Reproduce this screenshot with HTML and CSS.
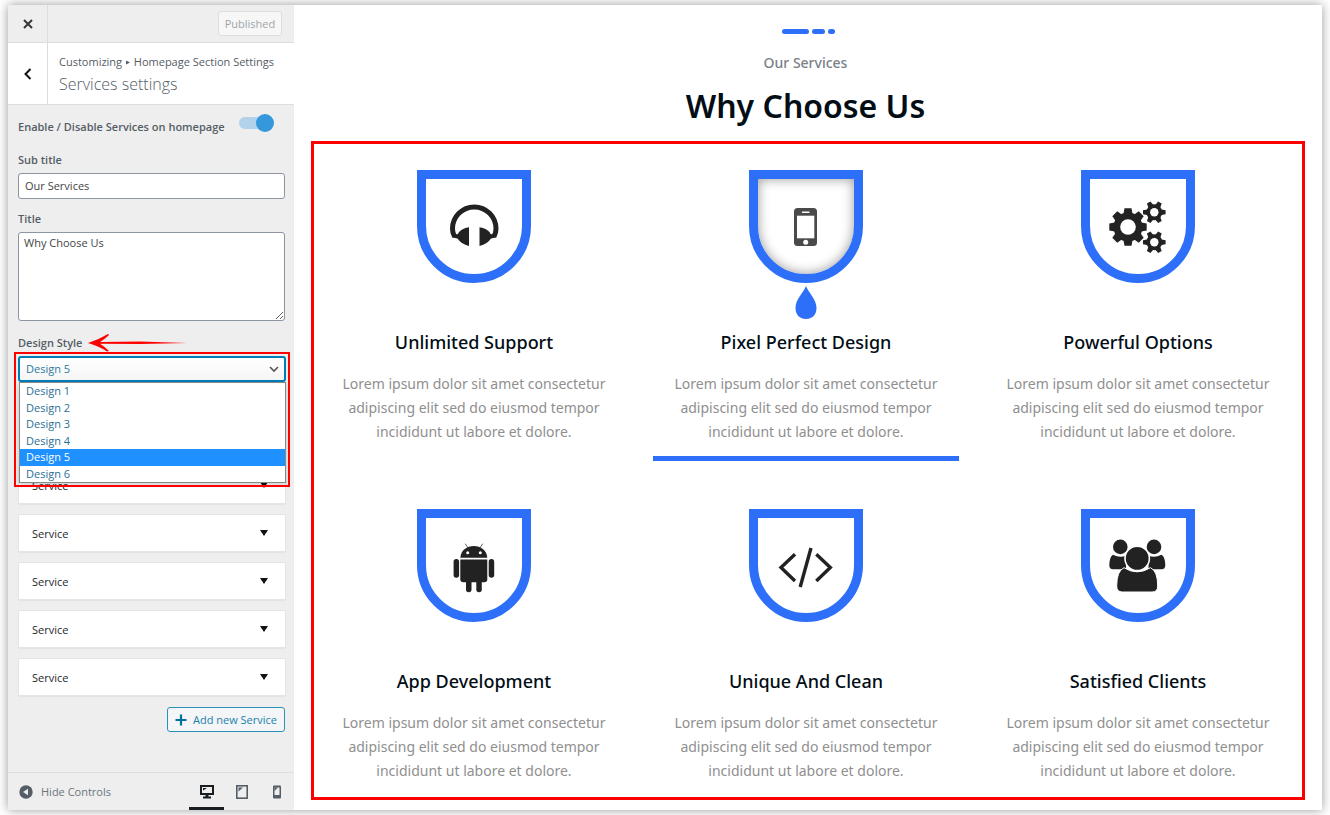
FILE: index.html
```html
<!DOCTYPE html>
<html lang="en">
<head>
  <meta charset="UTF-8" />
  <meta name="viewport" content="width=device-width, initial-scale=1" />
  <title>Services settings</title>
  <link rel="stylesheet" href="styles.css">
</head>
<body>

<div class="customizer">

  <aside class="sidebar">
    <header class="top-bar">
      <button class="close" aria-label="Close">
        <svg width="10" height="10" viewBox="0 0 10 10"><path d="M1 1L9 9M9 1L1 9" stroke="#32373c" stroke-width="2" fill="none"/></svg>
      </button>
      <button class="published" disabled>Published</button>
    </header>

    <div class="section-title">
      <button class="back" aria-label="Back">
        <svg width="8" height="12" viewBox="0 0 8 12"><path d="M6.5 1L1.500 6L6.5 11" stroke="#111" stroke-width="2" fill="none"/></svg>
      </button>
      <div class="section-text">
        <p class="crumbs">Customizing <svg width="4" height="5" viewBox="0 0 5 6"><path d="M0 0.5L5 3L0 5.5z" fill="#555d66"/></svg> Homepage Section Settings</p>
        <h1>Services settings</h1>
      </div>
    </div>

    <form class="controls">
      <div class="toggle-row">
        <label for="enable">Enable / Disable Services on homepage</label>
        <input type="checkbox" id="enable" class="toggle" checked />
      </div>

      <label class="field-label" for="subtitle">Sub title</label>
      <input type="text" id="subtitle" class="text-input" value="Our Services" />

      <label class="field-label" for="title">Title</label>
      <textarea id="title" class="text-area">Why Choose Us</textarea>

      <div class="style-label">
        <label for="design">Design Style</label>
        <svg width="100" height="20" viewBox="0 0 100 20">
          <path d="M0 10Q10 7 20 1L21 2Q17 6 12 9L52 8.500L99 10L52 11L12 10.800Q17 14 21 18L19 18.500Q11 13 0 10z" fill="#f00"/>
        </svg>
      </div>
      <div class="select-wrap">
        <select id="design" class="select">
          <option>Design 1</option>
          <option>Design 2</option>
          <option>Design 3</option>
          <option>Design 4</option>
          <option selected>Design 5</option>
          <option>Design 6</option>
        </select>
        <svg class="chevron" width="10" height="7" viewBox="0 0 10 7"><path d="M1 1L5 5L9 1" stroke="#555" stroke-width="1.600" fill="none"/></svg>
        <ul class="dropdown" role="listbox" aria-label="Design Style">
          <li role="option">Design 1</li>
          <li role="option">Design 2</li>
          <li role="option">Design 3</li>
          <li role="option">Design 4</li>
          <li role="option" class="selected" aria-selected="true">Design 5</li>
          <li role="option">Design 6</li>
        </ul>
        <div class="highlight"></div>
      </div>

      <div class="service-list">
        <button type="button" class="service-item">Service <span class="arrow"></span></button>
        <button type="button" class="service-item">Service <span class="arrow"></span></button>
        <button type="button" class="service-item">Service <span class="arrow"></span></button>
        <button type="button" class="service-item">Service <span class="arrow"></span></button>
        <button type="button" class="service-item">Service <span class="arrow"></span></button>
      </div>

      <button type="button" class="add-service">
        <svg width="12" height="12" viewBox="0 0 12 12"><path d="M6 0.500V11.500M0.500 6H11.500" stroke="#0071a1" stroke-width="2.200"/></svg>
        Add new Service
      </button>
    </form>

    <footer class="bottom-bar">
      <button class="hide-controls">
        <svg width="14" height="14" viewBox="0 0 14 14"><circle cx="7" cy="7" r="6.700" fill="#555d66"/><path d="M9 3.800V10.200L4 7z" fill="#eee"/></svg>
        Hide Controls
      </button>
      <div class="devices">
        <button class="device active" aria-label="Desktop">
          <svg width="14" height="14" viewBox="0 0 14 14"><path d="M1 1H13V9H1z" fill="#eee" stroke="#191e23" stroke-width="2"/><path d="M3 3H7L3 5.500z" fill="#191e23"/><path d="M5.500 9H8.500V11.500H11V13.500H3V11.500H5.500z" fill="#191e23"/></svg>
        </button>
        <button class="device" aria-label="Tablet">
          <svg width="12" height="14" viewBox="0 0 12 14"><rect x="0.800" y="0.800" width="10.400" height="12.400" fill="#eee" stroke="#555d66" stroke-width="1.600"/><path d="M2.500 2.500H7L2.500 6.500z" fill="#555d66"/></svg>
        </button>
        <button class="device" aria-label="Mobile">
          <svg width="10" height="14" viewBox="0 0 10 14"><rect x="1" y="0.500" width="8" height="13" rx="1" fill="#555d66"/><path d="M2.500 2.500H7.500V10H2.500z" fill="#eee"/><path d="M2.500 2.500H6L2.500 6z" fill="#555d66"/></svg>
        </button>
      </div>
    </footer>
  </aside>

  <main class="preview">
    <div class="heading">
      <div class="dashes"><span class="dash long"></span><span class="dash mid"></span><span class="dash short"></span></div>
      <p>Our Services</p>
      <h2>Why Choose Us</h2>
    </div>

    <section class="services">
      <article class="card">
        <div class="shield">
          <svg width="60" height="60" viewBox="0 0 60 60" fill="#222">
            <path d="M10.500 39.500Q8.500 36 8.500 31.700A21.700 21.700 0 0 1 52 31.700Q52 36 50 39.500" fill="none" stroke="#222" stroke-width="5"/>
            <path d="M25 30.300L21.500 31Q15 33.500 14 37L8.500 38V40.500L13.500 41.500Q17 47 25 49z"/>
            <path d="M35.500 30.300L39 31Q45.500 33.500 46.500 37L52 38V40.500L47 41.500Q43.500 47 35.500 49z"/>
          </svg>
        </div>
        <h3>Unlimited Support</h3>
        <p>Lorem ipsum dolor sit amet consectetur adipiscing elit sed do eiusmod tempor incididunt ut labore et dolore.</p>
      </article>

      <article class="card active">
        <div class="shield">
          <svg width="60" height="60" viewBox="0 0 60 60">
            <rect x="18" y="11" width="23" height="38" rx="3.500" fill="#4a4a4a"/>
            <rect x="21" y="18.700" width="17.300" height="22.600" fill="#fff"/>
            <circle cx="29.700" cy="45.200" r="2.500" fill="#fff"/>
            <path d="M26.500 15.300H33" stroke="#fff" stroke-width="1.400" stroke-linecap="round"/>
          </svg>
          <svg class="drop" width="22" height="34" viewBox="0 0 22 34"><path d="M11 0C13 6 21.500 13 21.500 22C21.500 29 17 33 11 33C5 33 0.500 29 0.500 22C0.500 13 9 6 11 0z" fill="#2d6ff9"/></svg>
        </div>
        <h3>Pixel Perfect Design</h3>
        <p>Lorem ipsum dolor sit amet consectetur adipiscing elit sed do eiusmod tempor incididunt ut labore et dolore.</p>
      </article>

      <article class="card">
        <div class="shield">
          <svg width="60" height="60" viewBox="0 0 60 60" fill="#222">
            <defs>
              <path id="tooth" d="M-4.700 -12L-3.500 -18.700H3.500L4.700 -12z"/>
              <g id="teeth"><use href="#tooth"/><use href="#tooth" transform="rotate(90)"/><use href="#tooth" transform="rotate(180)"/><use href="#tooth" transform="rotate(270)"/></g>
              <path id="cog" d="M-3 -6L-2 -11.300H2L3 -6z"/>
              <g id="gear">
                <circle r="8"/>
                <use href="#cog" transform="rotate(30)"/><use href="#cog" transform="rotate(90)"/><use href="#cog" transform="rotate(150)"/>
                <use href="#cog" transform="rotate(210)"/><use href="#cog" transform="rotate(270)"/><use href="#cog" transform="rotate(330)"/>
                <circle r="4.200" fill="#fff"/>
              </g>
            </defs>
            <g transform="translate(20 30)">
              <circle r="14.500"/>
              <use href="#teeth"/>
              <use href="#teeth" transform="rotate(45)"/>
              <circle r="7.800" fill="#fff"/>
            </g>
            <use href="#gear" transform="translate(46.300 15.300)"/>
            <use href="#gear" transform="translate(46.300 45.200)"/>
          </svg>
        </div>
        <h3>Powerful Options</h3>
        <p>Lorem ipsum dolor sit amet consectetur adipiscing elit sed do eiusmod tempor incididunt ut labore et dolore.</p>
      </article>

      <article class="card">
        <div class="shield">
          <svg width="60" height="60" viewBox="0 0 60 60" fill="#222">
            <path d="M21.300 7.700L24 12M38.700 7.700L36 12" stroke="#666" stroke-width="1"/>
            <path d="M16.300 21.700C17 14 23 10 29.800 10C36.600 10 42.600 14 43.300 21.700z"/>
            <circle cx="23.700" cy="16.700" r="1.500" fill="#fff"/>
            <circle cx="36.300" cy="16.700" r="1.500" fill="#fff"/>
            <path d="M16.300 23.400H43.300V43.300Q43.300 46.300 40.300 46.300H19.300Q16.300 46.300 16.300 43.300z"/>
            <rect x="9.600" y="23" width="5.500" height="18.700" rx="2.700"/>
            <rect x="44.700" y="23" width="5.500" height="18.700" rx="2.700"/>
            <rect x="22" y="42" width="5.500" height="14.300" rx="2.700"/>
            <rect x="32.300" y="42" width="5.500" height="14.300" rx="2.700"/>
          </svg>
        </div>
        <h3>App Development</h3>
        <p>Lorem ipsum dolor sit amet consectetur adipiscing elit sed do eiusmod tempor incididunt ut labore et dolore.</p>
      </article>

      <article class="card">
        <div class="shield">
          <svg width="60" height="60" viewBox="0 0 60 60" fill="none" stroke="#222" stroke-width="3.400">
            <path d="M19 18.300L5 31.600L19 45"/>
            <path d="M40.300 18.300L54.300 31.600L40.300 45"/>
            <path d="M35 12L24.200 51"/>
          </svg>
        </div>
        <h3>Unique And Clean</h3>
        <p>Lorem ipsum dolor sit amet consectetur adipiscing elit sed do eiusmod tempor incididunt ut labore et dolore.</p>
      </article>

      <article class="card">
        <div class="shield">
          <svg width="60" height="60" viewBox="0 0 60 60" fill="#222">
            <circle cx="12.300" cy="10.900" r="7.300"/>
            <circle cx="46" cy="10.900" r="7.300"/>
            <path d="M5 18.700Q12 22.500 18 19.500V33.300H5Q1.300 33.300 1.300 29Q1.300 21 5 18.700z"/>
            <path d="M53.500 18.700Q46.500 22.500 40.500 19.500V33.300H53.500Q57.300 33.300 57.300 29Q57.300 21 53.500 18.700z"/>
            <path d="M16 31.700Q29 40 42.500 31.700Q49.700 35 49.700 50Q49.700 56 44 56H14.500Q8.700 56 8.700 50Q8.700 35 16 31.700z" stroke="#fff" stroke-width="1"/>
            <circle cx="29.200" cy="22.400" r="12.200" stroke="#fff" stroke-width="1.600"/>
          </svg>
        </div>
        <h3>Satisfied Clients</h3>
        <p>Lorem ipsum dolor sit amet consectetur adipiscing elit sed do eiusmod tempor incididunt ut labore et dolore.</p>
      </article>
    </section>
  </main>

</div>

</body>
</html>
```
FILE: styles.css
```css
* {
  box-sizing: border-box;
}

body {
  margin: 0;
  padding: 5px 8px;
  background: #fff;
  font-family: "Noto Sans", sans-serif;
}

h1, h2, h3, p, ul {
  margin: 0;
  padding: 0;
}

button {
  font-family: inherit;
  padding: 0;
  border: 0;
  background: none;
  cursor: pointer;
}

svg {
  flex-shrink: 0;
}

.customizer {
  display: flex;
  min-height: calc(100vh - 10px);
  background: #fff;
  box-shadow: 0 0 10px rgba(0,0,0,0.4);
}

/* Sidebar */
.sidebar {
  display: flex;
  flex-direction: column;
  width: 286px;
  flex-shrink: 0;
  background: #eee;
  color: #555d66;
  font-family: "Open Sans", sans-serif;
  font-size: 11px;
  line-height: 16px;
}

.top-bar {
  display: flex;
  align-items: center;
  justify-content: space-between;
  height: 38px;
  padding-right: 12px;
  border-bottom: 1px solid #ddd;
}

.close, .back {
  display: flex;
  align-items: center;
  justify-content: center;
  align-self: stretch;
  width: 40px;
  border-right: 1px solid #ddd;
}

.published {
  width: 64px;
  height: 25px;
  border: 1px solid #ddd;
  border-radius: 3px;
  background: #f7f7f7;
  color: #a0a5aa;
  font-size: 11px;
}

.section-title {
  display: flex;
  height: 62px;
  background: #fff;
  border-bottom: 1px solid #ddd;
}

.section-text {
  padding: 11px 0 0 11px;
  white-space: nowrap;
}

.crumbs svg {
  margin: 0 1px;
  vertical-align: 1px;
}

.section-text h1 {
  font-size: 16px;
  font-weight: 300;
  line-height: 24px;
  margin-top: 2px;
}

.controls {
  flex: 1;
  display: flex;
  flex-direction: column;
  padding: 9px 9px 0 10px;
}

.controls label {
  font-weight: 600;
}

.toggle-row {
  display: flex;
  justify-content: space-between;
  padding-right: 11px;
  height: 26px;
}

.toggle-row label {
  margin-top: 5px;
  white-space: nowrap;
}

.toggle {
  appearance: none;
  position: relative;
  width: 35px;
  height: 18px;
  margin: 0;
}

.toggle::before {
  content: "";
  position: absolute;
  top: 3px;
  left: 0;
  width: 30px;
  height: 12px;
  border-radius: 6px;
  background: #b1d2ea;
}

.toggle::after {
  content: "";
  position: absolute;
  top: 0;
  right: 0;
  width: 18px;
  height: 18px;
  border-radius: 50%;
  background: #3498db;
}

.field-label {
  margin: 12px 0 5px;
}

.text-input, .text-area {
  width: 100%;
  border: 1px solid #8d96a0;
  border-radius: 3px;
  background: #fff;
  color: #444;
  font-family: inherit;
  font-size: 11px;
}

.text-input {
  height: 26px;
  padding: 0 6px 1px;
}

.text-area {
  display: block;
  height: 89px;
  padding: 2px 5px;
  line-height: 16px;
}

.style-label {
  display: flex;
  align-items: center;
  gap: 6px;
  height: 20px;
  margin: 12px 0 3px;
}

.select-wrap {
  position: relative;
  margin-right: -1px;
}

.select {
  appearance: none;
  display: block;
  width: 100%;
  height: 26px;
  padding: 0 6px 1px;
  border: 2px solid #007cba;
  border-radius: 3px;
  background: linear-gradient(#fff, #f5f5f5);
  color: #2a7ba3;
  font-family: inherit;
  font-size: 11px;
}

.chevron {
  position: absolute;
  top: 10px;
  right: 7px;
}

.dropdown {
  position: absolute;
  top: 26px;
  left: 1px;
  right: 0;
  z-index: 2;
  display: flex;
  flex-direction: column;
  height: 101px;
  list-style: none;
  border: 1px solid #888;
  background: #fff;
  color: #2a6f95;
  box-shadow: 0 2px 4px rgba(0,0,0,0.2);
}

.dropdown li {
  flex: 1;
  padding-left: 6px;
}

.dropdown .selected {
  background: #1e90ff;
  color: #fff;
}

/* red frame around the open menu */
.highlight {
  position: absolute;
  top: -4px;
  left: -4px;
  right: -4px;
  height: 135px;
  border: 2px solid #f00;
  z-index: 3;
  pointer-events: none;
}

.service-list {
  display: flex;
  flex-direction: column;
  gap: 10px;
  margin: 84px -1px 11px 0;
}

.service-item {
  display: flex;
  align-items: center;
  justify-content: space-between;
  height: 38px;
  padding: 0 17px 0 13px;
  border: 1px solid #e5e5e5;
  background: #fff;
  box-shadow: 0 1px 1px rgba(0,0,0,0.04);
  color: #23282d;
  font-size: 11px;
  font-weight: 500;
}

.arrow {
  border: 4px solid transparent;
  border-top: 6px solid #111;
  border-bottom: 0;
}

.add-service {
  display: flex;
  align-items: center;
  justify-content: center;
  gap: 6px;
  align-self: flex-end;
  width: 118px;
  height: 25px;
  border: 1px solid #2e8fb8;
  border-radius: 3px;
  background: #f3f5f6;
  color: #1a80ad;
  font-size: 11px;
  white-space: nowrap;
}

.bottom-bar {
  display: flex;
  justify-content: space-between;
  height: 38px;
  border-top: 1px solid #ddd;
}

.hide-controls {
  display: flex;
  align-items: center;
  gap: 8px;
  padding-left: 11px;
  color: #6c757d;
  font-size: 11px;
}

.devices {
  display: flex;
}

.device {
  display: flex;
  align-items: center;
  justify-content: center;
  width: 35px;
}

.device.active {
  padding-top: 3px;
  border-bottom: 3px solid #191e23;
}

/* Preview */
.preview {
  flex: 1;
  min-width: 0;
}

.heading {
  padding: 24px 5px 0 0;
  text-align: center;
}

.dashes {
  display: flex;
  justify-content: center;
  gap: 3px;
  padding-left: 6px;
}

.dash {
  height: 5px;
  border-radius: 3px;
  background: #2d6ff9;
}

.long { width: 27px; }
.mid { width: 13px; }
.short { width: 7px; }

.heading p {
  margin-top: 19px;
  color: #7a8087;
  font-size: 14px;
  font-weight: 500;
  line-height: 20px;
}

.heading h2 {
  margin-top: 13px;
  color: #020d15;
  font-size: 32px;
  font-weight: 600;
  line-height: 40px;
}

.services {
  display: grid;
  grid-template-columns: repeat(3, 1fr);
  gap: 53px 26px;
  margin: 15px 17px 0;
  padding: 26px 11px 2px 7px;
  border: 3px solid #f00;
}

.card {
  position: relative;
  display: flex;
  flex-direction: column;
  align-items: center;
  padding-bottom: 12px;
  text-align: center;
}

.card.active::after {
  content: "";
  position: absolute;
  top: 100%;
  left: 0;
  right: 0;
  height: 5px;
  background: #2d6ff9;
}

.shield {
  position: relative;
  display: flex;
  align-items: center;
  justify-content: center;
  width: 114px;
  height: 113px;
  border: 9px solid #2d6ff9;
  border-radius: 0 0 57px 57px;
}

.active .shield {
  box-shadow: inset 0 0 12px rgba(0,0,0,0.4);
}

.drop {
  position: absolute;
  top: 107px;
  left: 37px;
}

.card h3 {
  margin-top: 47px;
  color: #020d15;
  font-size: 18px;
  font-weight: 500;
  line-height: 24px;
}

.card p {
  max-width: 280px;
  margin-top: 18px;
  color: #8f8f8f;
  font-size: 14px;
  line-height: 24px;
}
```
